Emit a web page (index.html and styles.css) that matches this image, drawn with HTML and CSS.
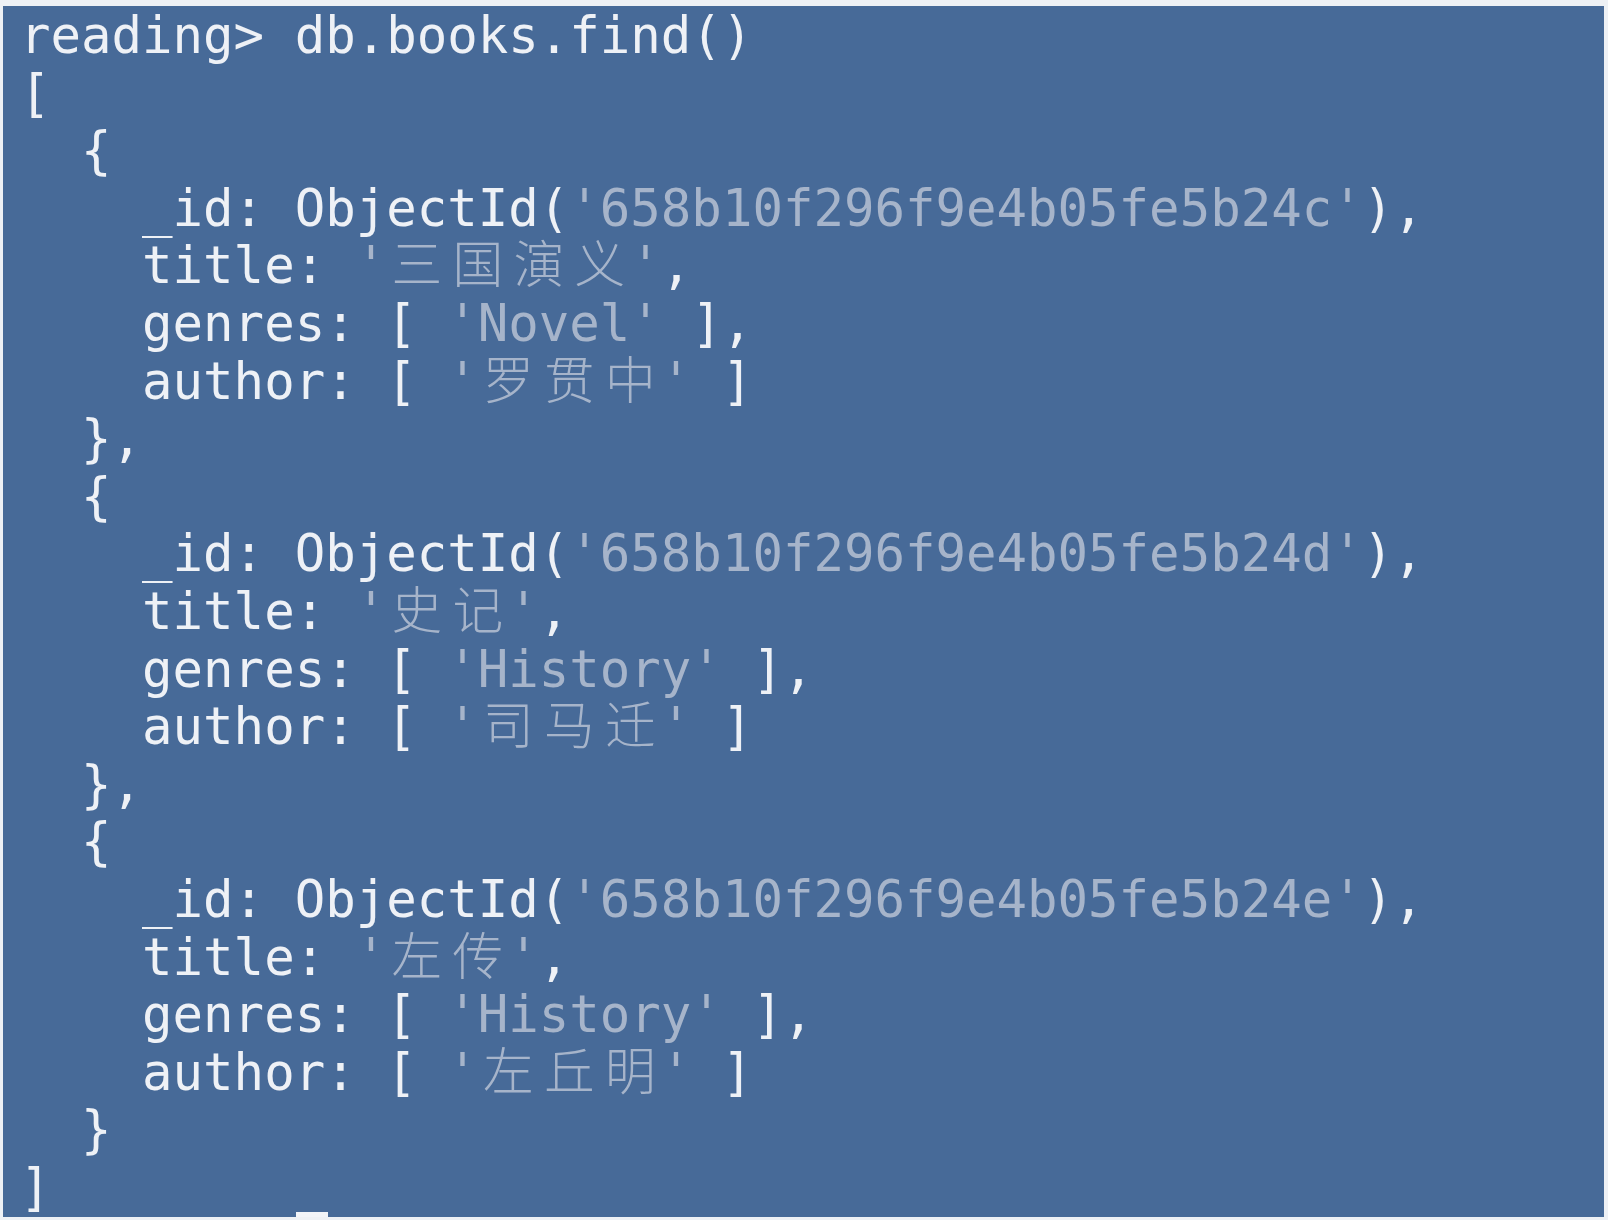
FILE: index.html
```html
<!DOCTYPE html>
<html lang="zh">
<head>
<meta charset="utf-8">
<title>mongosh</title>
<link rel="stylesheet" href="styles.css">
</head>
<body>
<div class="term">
<pre class="out">reading&gt; db.books.find()
[
  {
    _id: ObjectId(<span class="s">'658b10f296f9e4b05fe5b24c'</span>),
    title: <span class="s">'<span class="w">三</span><span class="w">国</span><span class="w">演</span><span class="w">义</span>'</span>,
    genres: [ <span class="s">'Novel'</span> ],
    author: [ <span class="s">'<span class="w">罗</span><span class="w">贯</span><span class="w">中</span>'</span> ]
  },
  {
    _id: ObjectId(<span class="s">'658b10f296f9e4b05fe5b24d'</span>),
    title: <span class="s">'<span class="w">史</span><span class="w">记</span>'</span>,
    genres: [ <span class="s">'History'</span> ],
    author: [ <span class="s">'<span class="w">司</span><span class="w">马</span><span class="w">迁</span>'</span> ]
  },
  {
    _id: ObjectId(<span class="s">'658b10f296f9e4b05fe5b24e'</span>),
    title: <span class="s">'<span class="w">左</span><span class="w">传</span>'</span>,
    genres: [ <span class="s">'History'</span> ],
    author: [ <span class="s">'<span class="w">左</span><span class="w">丘</span><span class="w">明</span>'</span> ]
  }
]</pre>
<span class="cursor"></span>
</div>
</body>
</html>
```
FILE: styles.css
```css
html, body {
  margin: 0;
  padding: 0;
  background: #eef1f5;
  height: 1220px;
  overflow: hidden;
}
.term {
  position: relative;
  margin: 6px 4px 0 3px;
  height: 1211px;
  background: #476a98;
  overflow: hidden;
}
.out {
  margin: 0;
  padding: 1px 0 0 17px;
  font-family: "DejaVu Sans Mono", "Noto Sans CJK SC", monospace;
  font-size: 50.7px;
  line-height: 57.6px;
  color: #eef1f6;
}
.s {
  color: #a6b4ca;
}
.w {
  display: inline-block;
  width: 2ch;
  text-align: center;
  font-weight: 300;
}
.cursor {
  position: absolute;
  left: 293px;
  bottom: 0;
  width: 32px;
  height: 5px;
  background: #f2f4f8;
}
```
